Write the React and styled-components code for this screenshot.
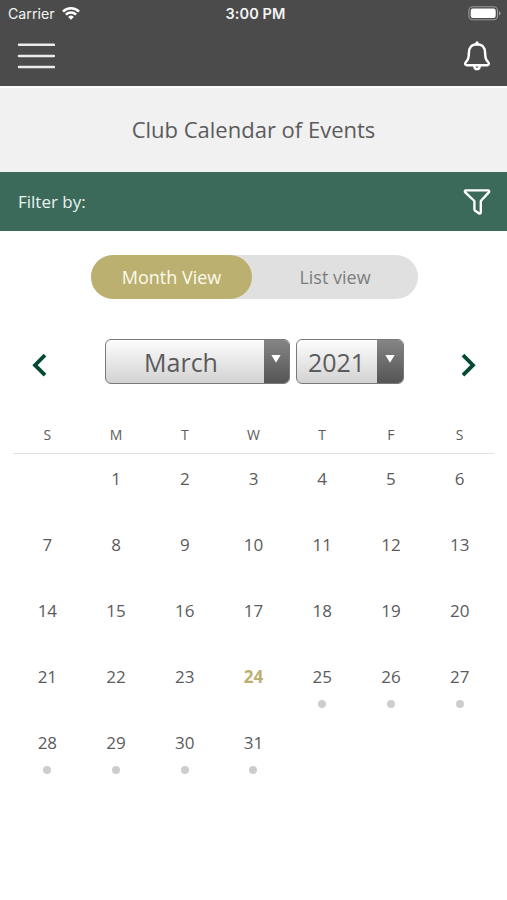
import React, { useState } from 'react';
import styled, { createGlobalStyle } from 'styled-components';

const colors = {
  dark: '#4b4b4b',
  green: '#3b6a5b',
  arrowGreen: '#044a31',
  gold: '#bbb070',
  greyLight: '#f1f1f1',
  greyToggle: '#e0e0e0',
  text: '#5b5b5b',
};

const weekDays = ['S', 'M', 'T', 'W', 'T', 'F', 'S'];
const today = 24;
const firstDayOffset = 1;
const days = Array.from({ length: 31 }, (_, i) => i + 1);

function App() {
  const [view, setView] = useState('month');
  return (
    <Wrapper>
      <GlobalStyle />
      <StatusBar>
        <Carrier>
          Carrier
          <svg width="18" height="13" viewBox="0 0 18 13">
            <g fill="none" stroke="#fff" strokeWidth="2.5">
              <path d="M1 4.6a11.3 11.3 0 0 1 16 0" />
              <path d="M3.9 7.7a7.2 7.2 0 0 1 10.2 0" />
            </g>
            <path d="M9 12.7 6.2 9.9a4 4 0 0 1 5.6 0z" fill="#fff" />
          </svg>
        </Carrier>
        <Time>3:00 PM</Time>
        <Battery>
          <svg width="34" height="15" viewBox="0 0 34 15">
            <rect
              x="0.9"
              y="0.8"
              width="28.6"
              height="13"
              rx="3.8"
              fill="none"
              stroke="#9a9a9a"
              strokeWidth="1.1"
            />
            <rect x="2.7" y="2.6" width="25" height="9.4" rx="2.2" fill="#fff" />
            <path d="M31 5.2q1.6.6 1.6 2.1T31 9.4z" fill="#9a9a9a" />
          </svg>
        </Battery>
      </StatusBar>
      <NavBar>
        <IconButton aria-label="Menu">
          <svg width="38" height="28" viewBox="0 0 38 28">
            <path
              d="M2 2.8h35M2 14h35M2 25.1h35"
              stroke="#ececec"
              strokeWidth="2.5"
              strokeLinecap="round"
            />
          </svg>
        </IconButton>
        <IconButton aria-label="Notifications">
          <svg width="28" height="32" viewBox="0 0 28 32">
            <g
              fill="none"
              stroke="#fff"
              strokeWidth="2.5"
              strokeLinecap="round"
              strokeLinejoin="round"
            >
              <path d="M14 4.2c-5.2 0-8.1 3.7-8.1 8.6 0 4.8-.6 7.4-3 9.3-1.3 1.1-.9 3.1.8 3.1h20.6c1.7 0 2.1-2 .8-3.1-2.4-1.9-3-4.5-3-9.3 0-4.9-2.9-8.6-8.1-8.6z" />
              <path d="M14 2.8v1.4" strokeWidth="3" />
              <path d="M11.4 26.2a2.6 2.9 0 0 0 5.2 0" />
            </g>
          </svg>
        </IconButton>
      </NavBar>
      <TitleBar>
        <h1>Club Calendar of Events</h1>
      </TitleBar>
      <FilterBar>
        <span>Filter by:</span>
        <IconButton aria-label="Filter">
          <svg width="28" height="28" viewBox="0 0 28 28">
            <path
              d="M3 2.4h22c1.2 0 1.6 1.1.8 2l-8 8.6v11.2c0 1.2-1.1 1.6-2 1l-3.6-2.5c-.5-.4-.8-.8-.8-1.5V13L2.3 4.4c-.9-.9-.5-2 .7-2z"
              fill="none"
              stroke="#fff"
              strokeWidth="2.4"
              strokeLinejoin="round"
            />
          </svg>
        </IconButton>
      </FilterBar>
      <Toggle>
        <ToggleButton
          $active={view === 'month'}
          onClick={() => setView('month')}
        >
          Month View
        </ToggleButton>
        <ToggleButton $active={view === 'list'} onClick={() => setView('list')}>
          List view
        </ToggleButton>
      </Toggle>
      <MonthPicker>
        <IconButton aria-label="Previous month">
          <Chevron d="M14 2.2 4 12.2l10 10" />
        </IconButton>
        <Selects>
          <Select label="March" width={185} arrow={25} shift={7} />
          <Select label="2021" width={108} arrow={26} shift={0} />
        </Selects>
        <IconButton aria-label="Next month">
          <Chevron d="M3 2.2l10 10-10 10" />
        </IconButton>
      </MonthPicker>
      <Calendar>
        <WeekRow>
          {weekDays.map((day, index) => (
            <span key={index}>{day}</span>
          ))}
        </WeekRow>
        <DayGrid>
          {days.map((day) => (
            <Day key={day} $today={day === today} $first={day === 1}>
              {day}
              {day > today && <Dot />}
            </Day>
          ))}
        </DayGrid>
      </Calendar>
    </Wrapper>
  );
}

const Chevron = ({ d }) => (
  <svg width="17" height="25" viewBox="0 0 17 25">
    <path d={d} fill="none" stroke={colors.arrowGreen} strokeWidth="3.8" />
  </svg>
);

const Select = ({ label, width, arrow, shift }) => (
  <SelectBox $width={width}>
    <SelectLabel $shift={shift}>{label}</SelectLabel>
    <SelectArrow $width={arrow}>
      <svg width="10" height="8" viewBox="0 0 10 8">
        <path d="M0.4 0h9.2L5 7.8z" fill="#fff" />
      </svg>
    </SelectArrow>
  </SelectBox>
);

const GlobalStyle = createGlobalStyle`
  * {
    box-sizing: border-box;
  }
  body {
    margin: 0;
    background-color: #fff;
  }
  button {
    border: 0;
    padding: 0;
    background: none;
    font: inherit;
    color: inherit;
  }
  svg {
    display: block;
  }
`;

const Wrapper = styled.section`
  width: 507px;
  height: 900px;
  overflow: hidden;
  font-family: 'Open Sans', sans-serif;
  color: ${colors.text};
  background-color: #fff;
`;

const StatusBar = styled.div`
  display: grid;
  grid-template-columns: 1fr auto 1fr;
  align-items: center;
  height: 27px;
  padding: 0 5px 0 8px;
  font-family: Inter, sans-serif;
  color: #f4f4f4;
  background-color: ${colors.dark};
`;

const Carrier = styled.div`
  display: flex;
  align-items: center;
  gap: 7px;
  font-size: 14.2px;
`;

const Time = styled.div`
  padding-left: 1px;
  font-size: 14.5px;
  font-weight: 600;
  letter-spacing: 0.1px;
`;

const Battery = styled.div`
  justify-self: end;
`;

const NavBar = styled.header`
  display: flex;
  justify-content: space-between;
  align-items: center;
  height: 59px;
  padding: 0 16px 1px 17px;
  background-color: ${colors.dark};
`;

const IconButton = styled.button`
  display: flex;
  cursor: pointer;
`;

const TitleBar = styled.div`
  display: flex;
  justify-content: center;
  align-items: center;
  height: 86px;
  padding-bottom: 2px;
  border-top: 2px solid #fbfbfb;
  background-color: ${colors.greyLight};
  h1 {
    margin: 0;
    font-size: 22px;
    font-weight: 400;
    line-height: 30px;
  }
`;

const FilterBar = styled.div`
  display: flex;
  justify-content: space-between;
  align-items: center;
  height: 59px;
  padding: 0 16px 0 18px;
  font-size: 17px;
  color: #e9f3ef;
  background-color: ${colors.green};
`;

const Toggle = styled.div`
  display: flex;
  width: 327px;
  height: 44px;
  margin: 24px 0 0 91px;
  border-radius: 22px;
  background-color: ${colors.greyToggle};
`;

const ToggleButton = styled.button`
  flex: ${({ $active }) => ($active ? '0 0 161px' : '1')};
  border-radius: 22px;
  font-size: 18px;
  color: ${({ $active }) => ($active ? '#fdfbee' : '#7d7d7d')};
  background-color: ${({ $active }) => ($active ? colors.gold : 'transparent')};
`;

const MonthPicker = styled.div`
  display: flex;
  justify-content: space-between;
  align-items: center;
  height: 45px;
  margin-top: 40px;
  padding: 0 30px 0 31px;
  > button {
    padding-top: 7px;
  }
`;

const Selects = styled.div`
  display: flex;
  gap: 6px;
`;

const SelectBox = styled.div`
  display: flex;
  width: ${({ $width }) => $width}px;
  height: 45px;
  overflow: hidden;
  border: 1.5px solid #7a7a7a;
  border-radius: 6px;
  background: linear-gradient(#fdfdfd, #d2d2d2);
`;

const SelectLabel = styled.span`
  flex: 1;
  padding-right: ${({ $shift }) => $shift}px;
  text-align: center;
  font-size: 25px;
  line-height: 44px;
`;

const SelectArrow = styled.span`
  display: flex;
  justify-content: center;
  width: ${({ $width }) => $width}px;
  padding-top: 15px;
  background: linear-gradient(#858585, #555);
`;

const Calendar = styled.div`
  width: 481px;
  margin: 31px auto 0 13px;
`;

const WeekRow = styled.div`
  display: grid;
  grid-template-columns: repeat(7, 1fr);
  height: 39px;
  border-bottom: 1px solid #e2e2e2;
  font-size: 14px;
  line-height: 39px;
  text-align: center;
`;

const DayGrid = styled.div`
  display: grid;
  grid-template-columns: repeat(7, 1fr);
  grid-auto-rows: 66px;
`;

const Day = styled.div`
  display: flex;
  flex-direction: column;
  align-items: center;
  padding-top: 13px;
  grid-column-start: ${({ $first }) => ($first ? firstDayOffset + 1 : 'auto')};
  font-size: 17px;
  line-height: 24px;
  font-weight: ${({ $today }) => ($today ? 700 : 400)};
  color: ${({ $today }) => ($today ? colors.gold : colors.text)};
`;

const Dot = styled.span`
  width: 8px;
  height: 8px;
  margin-top: 11px;
  border-radius: 50%;
  background-color: #cdcdcd;
`;

export default App;
